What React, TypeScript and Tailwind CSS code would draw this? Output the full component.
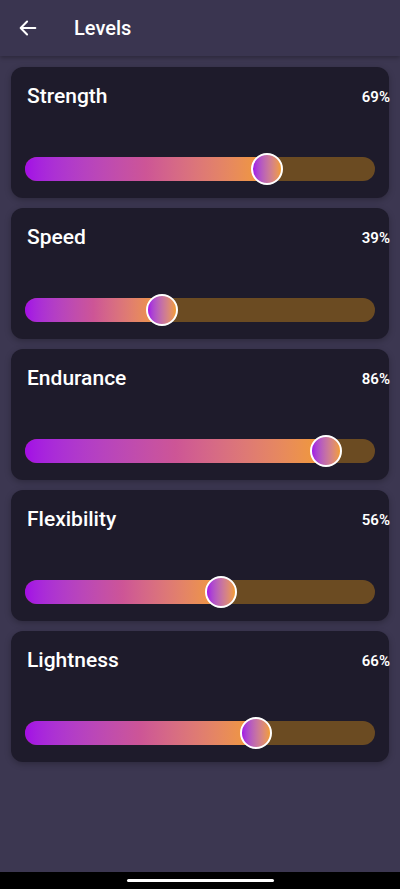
import React from "react";

type Level = { name: string; value: number };

const levels: Level[] = [
  { name: "Strength", value: 69 },
  { name: "Speed", value: 39 },
  { name: "Endurance", value: 86 },
  { name: "Flexibility", value: 56 },
  { name: "Lightness", value: 66 },
];

const BackArrow = () => (
  <svg width="22" height="22" viewBox="0 0 24 24" fill="none">
    <path
      d="M20 12H5M11 5l-7 7 7 7"
      stroke="white"
      strokeWidth="2.2"
      strokeLinecap="round"
      strokeLinejoin="round"
    />
  </svg>
);

const LevelCard: React.FC<Level> = ({ name, value }) => {
  return (
    <div className="h-[131px] rounded-xl bg-[#1e1b2b] shadow-[0_2px_6px_rgba(0,0,0,0.25)] flex flex-col">
      {/* Title row */}
      <div className="flex justify-between items-start pl-4 pt-[15px]">
        <span className="text-[21px] leading-7 font-medium text-white">{name}</span>
        <span className="text-[15px] leading-5 font-semibold text-white mt-[5px] -mr-px">
          {value}%
        </span>
      </div>

      {/* Slider */}
      <div className="mt-auto mb-[17px] mx-[14px] relative h-6 rounded-full bg-[#6b4b22]">
        <div
          className="h-6 rounded-l-full bg-gradient-to-r from-[#a30be6] via-[#cd5596] to-[#f29c2c]"
          style={{ width: `${value}%` }}
        />
        <div
          className="absolute top-1/2 w-[32px] h-[32px] -translate-x-1/2 -translate-y-1/2 rounded-full border-2 border-white bg-gradient-to-r from-[#a30be6] to-[#f29c2c]"
          style={{ left: `${value}%` }}
        />
      </div>
    </div>
  );
};

export default function App() {
  return (
    <div
      className="w-[400px] h-[889px] bg-[#3c3751] flex flex-col"
      style={{ fontFamily: "Roboto, 'Noto Sans', sans-serif" }}
    >
      {/* Header */}
      <div className="h-14 bg-[#3a3550] flex items-center shadow-[0_2px_4px_rgba(0,0,0,0.25)] z-10">
        <div className="pl-[17px] w-[74px]">
          <BackArrow />
        </div>
        <span className="text-[20px] font-medium text-white">Levels</span>
      </div>

      {/* Cards */}
      <div className="flex-1 px-[11px] pt-[11px] flex flex-col gap-[10px]">
        {levels.map((l) => (
          <LevelCard key={l.name} name={l.name} value={l.value} />
        ))}
      </div>

      {/* Home indicator */}
      <div className="h-[17px] bg-black flex justify-center items-center">
        <div className="w-[147px] h-[3px] rounded-full bg-white" />
      </div>
    </div>
  );
}
